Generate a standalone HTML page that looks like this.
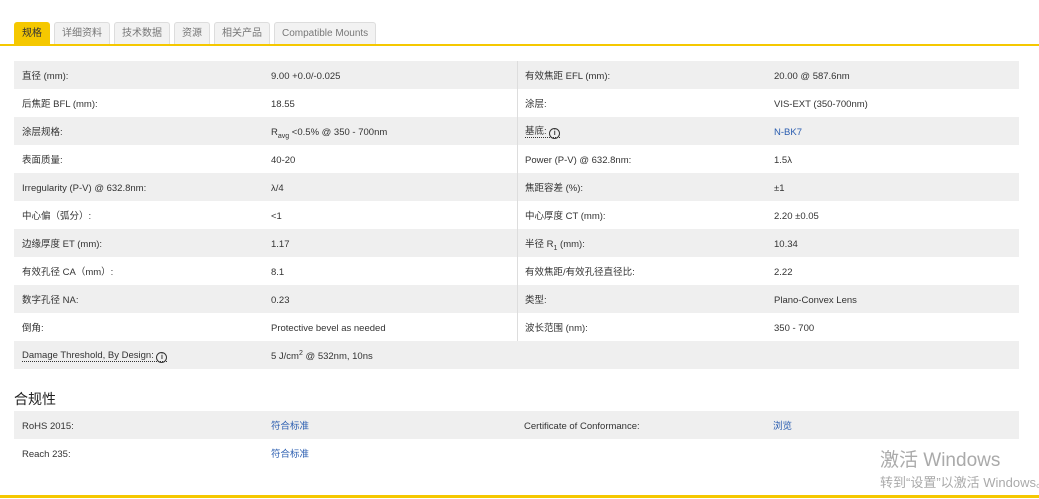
<!DOCTYPE html><html><head><meta charset="utf-8"><style>
body{margin:0;width:1039px;height:499px;overflow:hidden;background:#fff;font-family:"Liberation Sans","Noto Sans CJK SC",sans-serif;font-size:9.5px;color:#333;position:relative}
.tab{position:absolute;top:22px;height:22px;line-height:22px;padding:0 7px;background:#f2f2f2;border:1px solid #ddd;border-bottom:none;border-radius:3px 3px 0 0;color:#777;font-size:10px;box-sizing:border-box}
.tab.a{background:#f5c800;color:#333;border-color:#f5c800}
.line{position:absolute;left:0;width:1039px;height:2px;background:#f5c800}
table{position:absolute;left:14px;border-collapse:collapse;width:1005px}
td{height:25px;padding:3px 0 0 0;vertical-align:middle;white-space:nowrap;line-height:12px}
sub,sup{line-height:0;font-size:7px}
tr:nth-child(odd) td{background:#efefef}
td.l1{padding-left:8px;width:249px}td.v1{width:246px}
td.l2{padding-left:7px;width:249px;border-left:1px solid #ddd}
a{color:#2a5db0;text-decoration:none}
.u{border-bottom:1px dotted #333}
.i{display:inline-block;width:9px;height:9px;border:1.3px solid #333;border-radius:50%;font-size:7px;line-height:9px;text-align:center;font-weight:bold;vertical-align:-1px}
h3{position:absolute;left:14px;top:389px;margin:0;font-size:14px;font-weight:normal;color:#222}
.w{position:absolute;left:880px;color:#aaa;white-space:nowrap}
</style></head><body>
<div class="tab a" style="left:14px">规格</div>
<div class="tab" style="left:54px">详细资料</div>
<div class="tab" style="left:114px">技术数据</div>
<div class="tab" style="left:174px">资源</div>
<div class="tab" style="left:214px">相关产品</div>
<div class="tab" style="left:274px">Compatible Mounts</div>
<div class="line" style="top:44px"></div>
<table style="top:61px">
<tr><td class="l1">直径 (mm):</td><td class="v1">9.00 +0.0/-0.025</td><td class="l2">有效焦距 EFL (mm):</td><td>20.00 @ 587.6nm</td></tr>
<tr><td class="l1">后焦距 BFL (mm):</td><td class="v1">18.55</td><td class="l2">涂层:</td><td>VIS-EXT (350-700nm)</td></tr>
<tr><td class="l1">涂层规格:</td><td class="v1">R<sub>avg</sub> &lt;0.5% @ 350 - 700nm</td><td class="l2"><span class="u">基底: <span class="i">i</span></span></td><td><a>N-BK7</a></td></tr>
<tr><td class="l1">表面质量:</td><td class="v1">40-20</td><td class="l2">Power (P-V) @ 632.8nm:</td><td>1.5λ</td></tr>
<tr><td class="l1">Irregularity (P-V) @ 632.8nm:</td><td class="v1">λ/4</td><td class="l2">焦距容差 (%):</td><td>±1</td></tr>
<tr><td class="l1">中心偏（弧分）:</td><td class="v1">&lt;1</td><td class="l2">中心厚度 CT (mm):</td><td>2.20 ±0.05</td></tr>
<tr><td class="l1">边缘厚度 ET (mm):</td><td class="v1">1.17</td><td class="l2">半径 R<sub>1</sub> (mm):</td><td>10.34</td></tr>
<tr><td class="l1">有效孔径 CA（mm）:</td><td class="v1">8.1</td><td class="l2">有效焦距/有效孔径直径比:</td><td>2.22</td></tr>
<tr><td class="l1">数字孔径 NA:</td><td class="v1">0.23</td><td class="l2">类型:</td><td>Plano-Convex Lens</td></tr>
<tr><td class="l1">倒角:</td><td class="v1">Protective bevel as needed</td><td class="l2">波长范围 (nm):</td><td>350 - 700</td></tr>
<tr><td class="l1"><span class="u">Damage Threshold, By Design: <span class="i">i</span></span></td><td class="v1">5 J/cm<sup>2</sup> @ 532nm, 10ns</td><td class="l2" style="border-left:none"></td><td></td></tr>
</table>
<h3>合规性</h3>
<table style="top:411px">
<tr><td class="l1">RoHS 2015:</td><td class="v1"><a>符合标准</a></td><td class="l2" style="border-left:none">Certificate of Conformance:</td><td><a>浏览</a></td></tr>
<tr><td class="l1">Reach 235:</td><td class="v1"><a>符合标准</a></td><td class="l2" style="border-left:none"></td><td></td></tr>
</table>
<div class="w" style="top:445px;font-size:19px">激活 Windows</div>
<div class="w" style="top:472px;font-size:13px">转到“设置”以激活 Windows。</div>
<div class="line" style="top:495px;height:3px"></div>
</body></html>
